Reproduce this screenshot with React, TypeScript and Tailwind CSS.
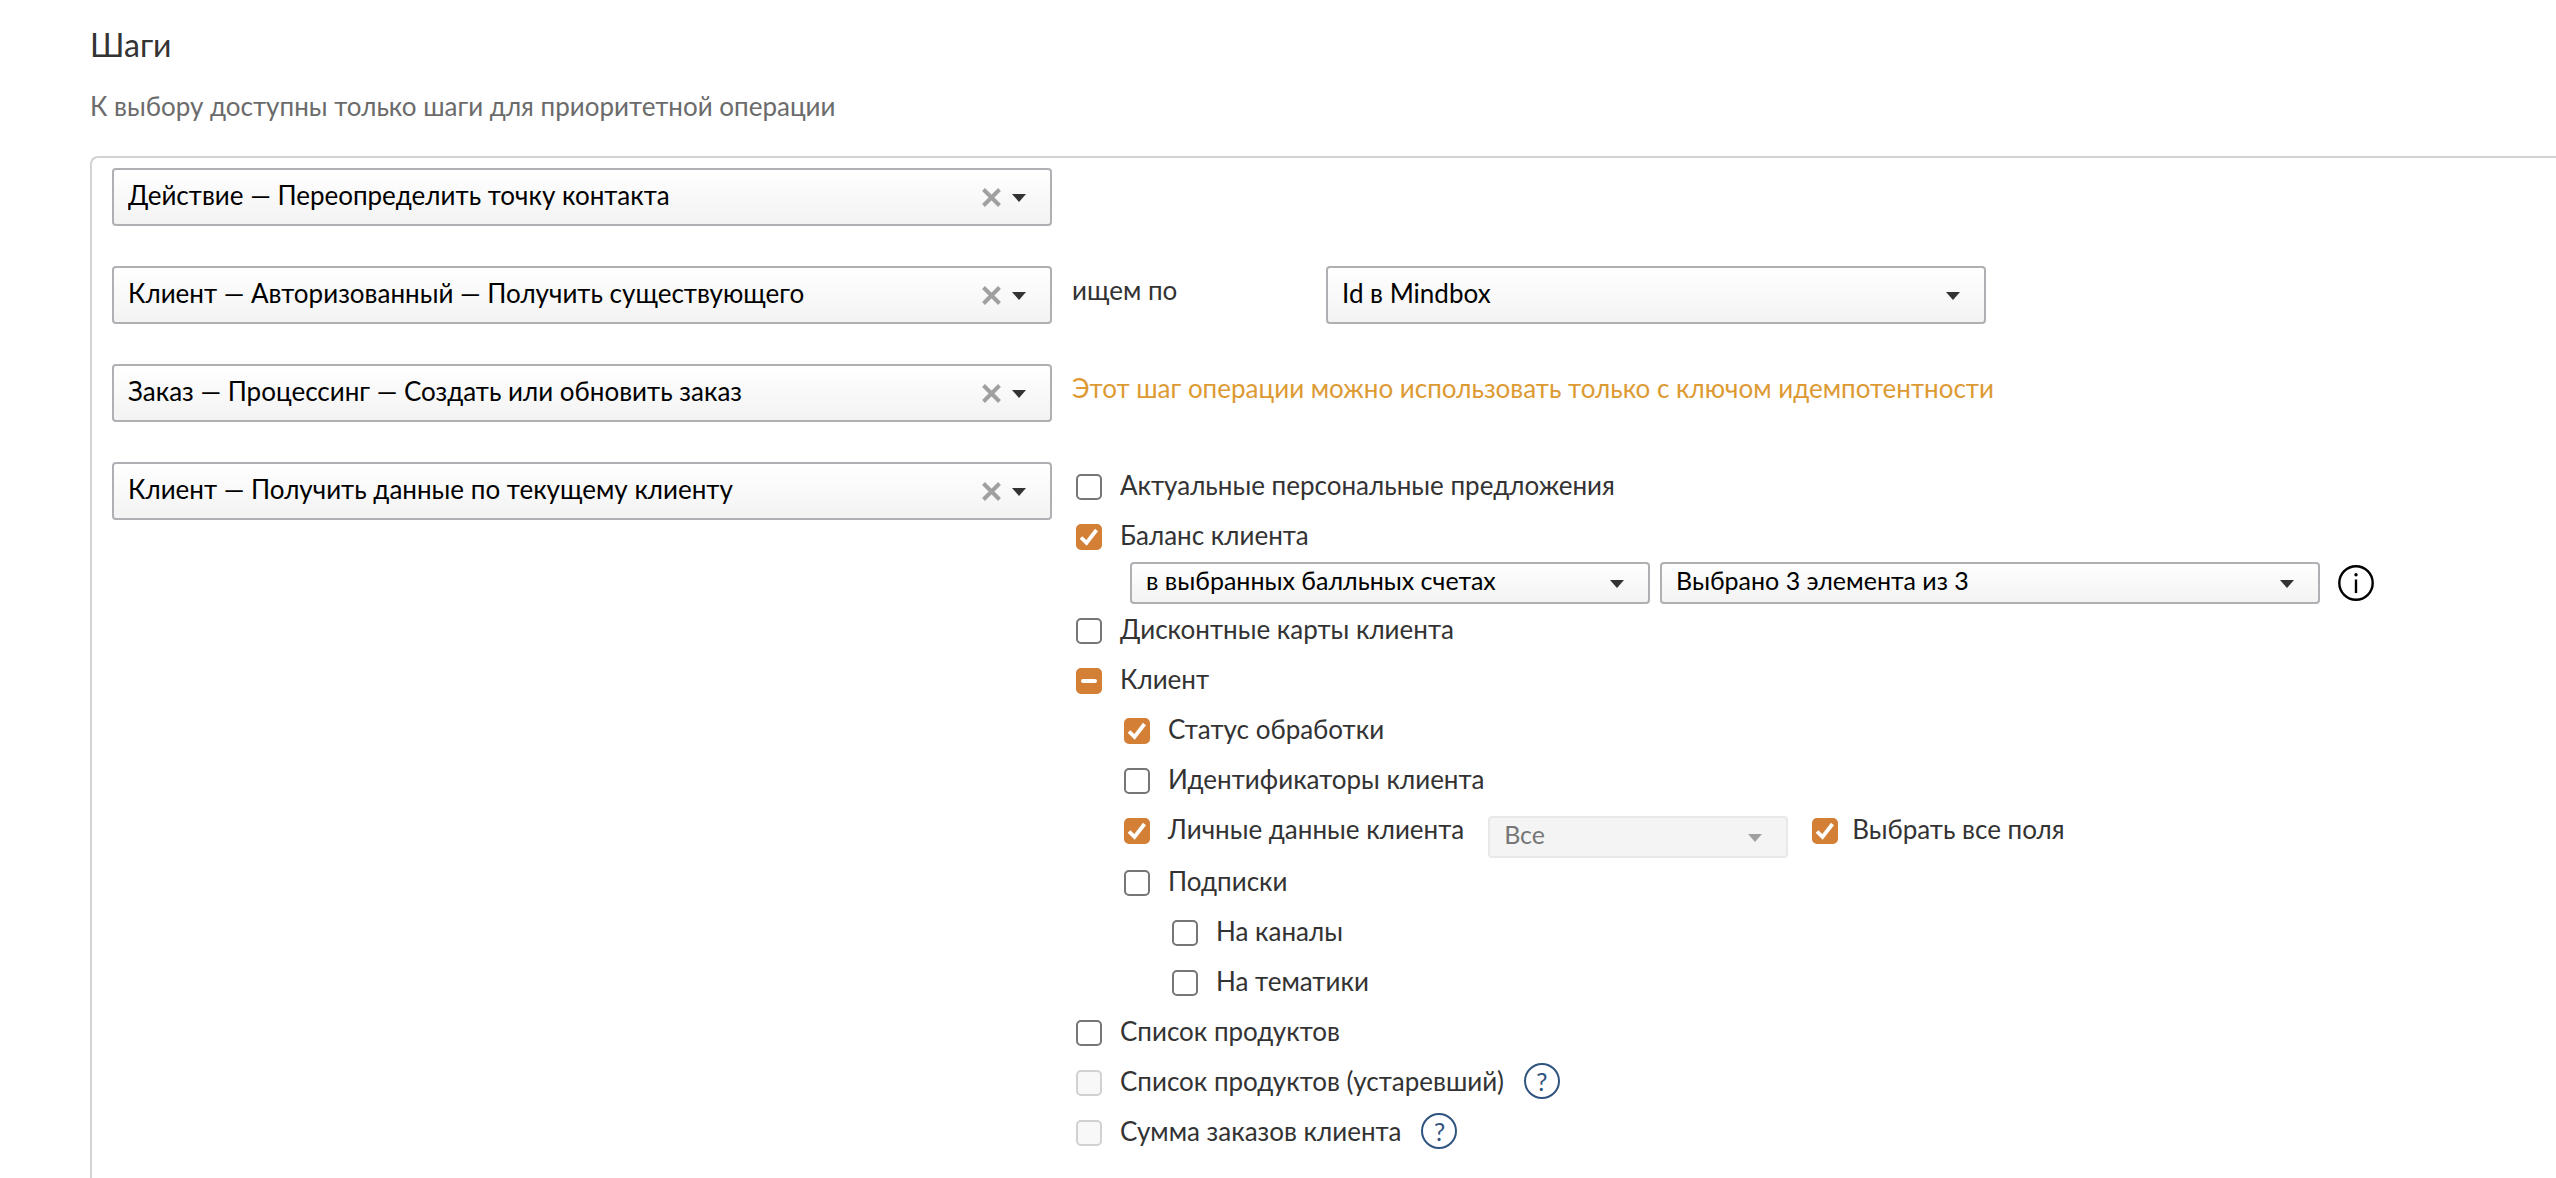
import React, { useEffect, useRef, useState } from 'react';

interface SelectBoxProps {
  label: string;
  value: string;
  width: string;
  small?: boolean;
  disabled?: boolean;
  clearable?: boolean;
}

const SelectBox: React.FC<SelectBoxProps> = ({ label, value, width, small, disabled, clearable }) => {
  return (
    <div className={`grid items-center ${width}`}>
      <select
        aria-label={label}
        disabled={disabled}
        defaultValue={value}
        className={`[grid-area:1/1] w-full appearance-none rounded-[4px] border-2 pl-[14px] pr-20 outline-none ${
          small ? 'h-[42px] pb-[6px] text-[25px] leading-8' : 'h-[58px] pb-1 text-[26px] leading-10'
        } ${
          disabled
            ? 'border-[#e8e8e8] bg-[#f4f4f4] text-[#777777] opacity-100'
            : 'border-[#afafb4] bg-linear-to-b from-white to-[#f3f3f3] text-black'
        }`}
      >
        <option>{value}</option>
      </select>
      <div className="[grid-area:1/1] flex items-center gap-[11px] justify-self-end pr-[26px] pointer-events-none">
        {clearable && (
          <button type="button" aria-label="Очистить" className="pointer-events-auto">
            <svg width="19" height="19" viewBox="0 0 19 19" fill="none" stroke="#a0a0a0" strokeWidth="4">
              <path d="M1.5 1.5 17.5 17.5M17.5 1.5 1.5 17.5" />
            </svg>
          </button>
        )}
        <svg width="14" height="10" viewBox="0 0 14 10" fill={disabled ? '#a0a0a0' : '#333333'}>
          <path d="M0 2H14L7 10Z" />
        </svg>
      </div>
    </div>
  );
};

interface CheckProps {
  label: string;
  indent?: string;
  gap?: string;
  checked?: boolean;
  indeterminate?: boolean;
  disabled?: boolean;
  children?: React.ReactNode;
}

const Check: React.FC<CheckProps> = ({
  label,
  indent = 'pl-1',
  gap = 'gap-[18px]',
  checked = false,
  indeterminate = false,
  disabled,
  children,
}) => {
  const [isChecked, setIsChecked] = useState(checked);
  const [isMixed, setIsMixed] = useState(indeterminate);
  const ref = useRef<HTMLInputElement>(null);

  useEffect(() => {
    if (ref.current) ref.current.indeterminate = isMixed;
  }, [isMixed]);

  const toggle = () => {
    setIsMixed(false);
    setIsChecked(!isChecked);
  };

  return (
    <div className={`flex items-center gap-5 ${indent}`}>
      <label className={`flex h-[50px] items-center ${gap}`}>
        <span className="grid shrink-0">
          <input
            ref={ref}
            type="checkbox"
            checked={isChecked}
            onChange={toggle}
            disabled={disabled}
            className="[grid-area:1/1] size-[26px] appearance-none rounded-[5px] border-2 border-[#767676] bg-white checked:border-[#d47f36] checked:bg-[#d47f36] indeterminate:border-[#d47f36] indeterminate:bg-[#d47f36] disabled:border-[#d1d1d1] disabled:bg-[#f8f8f8]"
          />
          <svg className="[grid-area:1/1] pointer-events-none" width="26" height="26" viewBox="0 0 26 26" fill="none" stroke="white">
            {isChecked && !isMixed && <path d="M5 13.5 10.5 18.8 20.5 6" strokeWidth="3.8" />}
            {isMixed && <path d="M7 13H19" strokeWidth="4" strokeLinecap="round" />}
          </svg>
        </span>
        <span className="pb-1 whitespace-nowrap">{label}</span>
      </label>
      {children}
    </div>
  );
};

const HelpButton: React.FC = () => (
  <button
    type="button"
    aria-label="Справка"
    className="mb-1 flex size-9 items-center justify-center rounded-full border-2 border-[#2f5480] text-[25px] leading-none text-[#2f5480]"
  >
    ?
  </button>
);

interface StepProps {
  value: string;
  children?: React.ReactNode;
}

const Step: React.FC<StepProps> = ({ value, children }) => (
  <div className="flex items-start gap-5">
    <SelectBox label="Шаг операции" value={value} width="w-[940px]" clearable />
    {children}
  </div>
);

const App: React.FC = () => {
  return (
    <main className="overflow-hidden bg-white pt-[25px] pl-[90px] font-['Lato','Noto_Sans',sans-serif] text-[26px] text-[#333333]">
      <h1 className="text-[32px] leading-10">Шаги</h1>
      <p className="mt-[25px] leading-8 text-[#6b6b6b]">К выбору доступны только шаги для приоритетной операции</p>

      <section className="mt-[34px] flex flex-col gap-10 rounded-tl-lg border-t-2 border-l-2 border-[#d3d3d3] pt-[10px] pb-5 pl-5">
        <Step value="Действие — Переопределить точку контакта" />

        <Step value="Клиент — Авторизованный — Получить существующего">
          <div className="flex items-start">
            <span className="w-[254px] leading-[48px]">ищем по</span>
            <SelectBox label="ищем по" value="Id в Mindbox" width="w-[660px]" />
          </div>
        </Step>

        <Step value="Заказ — Процессинг — Создать или обновить заказ">
          <p className="leading-[48px] text-[#dd9a33]">Этот шаг операции можно использовать только с ключом идемпотентности</p>
        </Step>

        <Step value="Клиент — Получить данные по текущему клиенту">
          <div>
            <Check label="Актуальные персональные предложения" />
            <Check label="Баланс клиента" checked />
            <div className="mb-[2px] flex items-center gap-[10px] pl-[58px]">
              <SelectBox label="Балльные счета" value="в выбранных балльных счетах" width="w-[520px]" small />
              <SelectBox label="Выбранные счета" value="Выбрано 3 элемента из 3" width="w-[660px]" small />
              <button type="button" aria-label="Информация" className="ml-2">
                <svg width="36" height="36" viewBox="0 0 36 36" fill="none" stroke="black" strokeWidth="2.4">
                  <circle cx="18" cy="18" r="16.7" />
                  <path d="M18 14.5V28" />
                  <circle cx="18" cy="9.8" r="1.7" fill="black" stroke="none" />
                </svg>
              </button>
            </div>
            <Check label="Дисконтные карты клиента" />
            <Check label="Клиент" indeterminate />
            <Check label="Статус обработки" indent="pl-[52px]" checked />
            <Check label="Идентификаторы клиента" indent="pl-[52px]" />
            <div className="flex items-start">
              <Check label="Личные данные клиента" indent="pl-[52px]" checked />
              <div className="mt-[10px] ml-6">
                <SelectBox label="Поля" value="Все" width="w-[300px]" small disabled />
              </div>
              <Check label="Выбрать все поля" indent="pl-6" gap="gap-[14px]" checked />
            </div>
            <Check label="Подписки" indent="pl-[52px]" />
            <Check label="На каналы" indent="pl-[100px]" />
            <Check label="На тематики" indent="pl-[100px]" />
            <Check label="Список продуктов" />
            <Check label="Список продуктов (устаревший)" disabled>
              <HelpButton />
            </Check>
            <Check label="Сумма заказов клиента" disabled>
              <HelpButton />
            </Check>
          </div>
        </Step>
      </section>
    </main>
  );
};

export default App;
